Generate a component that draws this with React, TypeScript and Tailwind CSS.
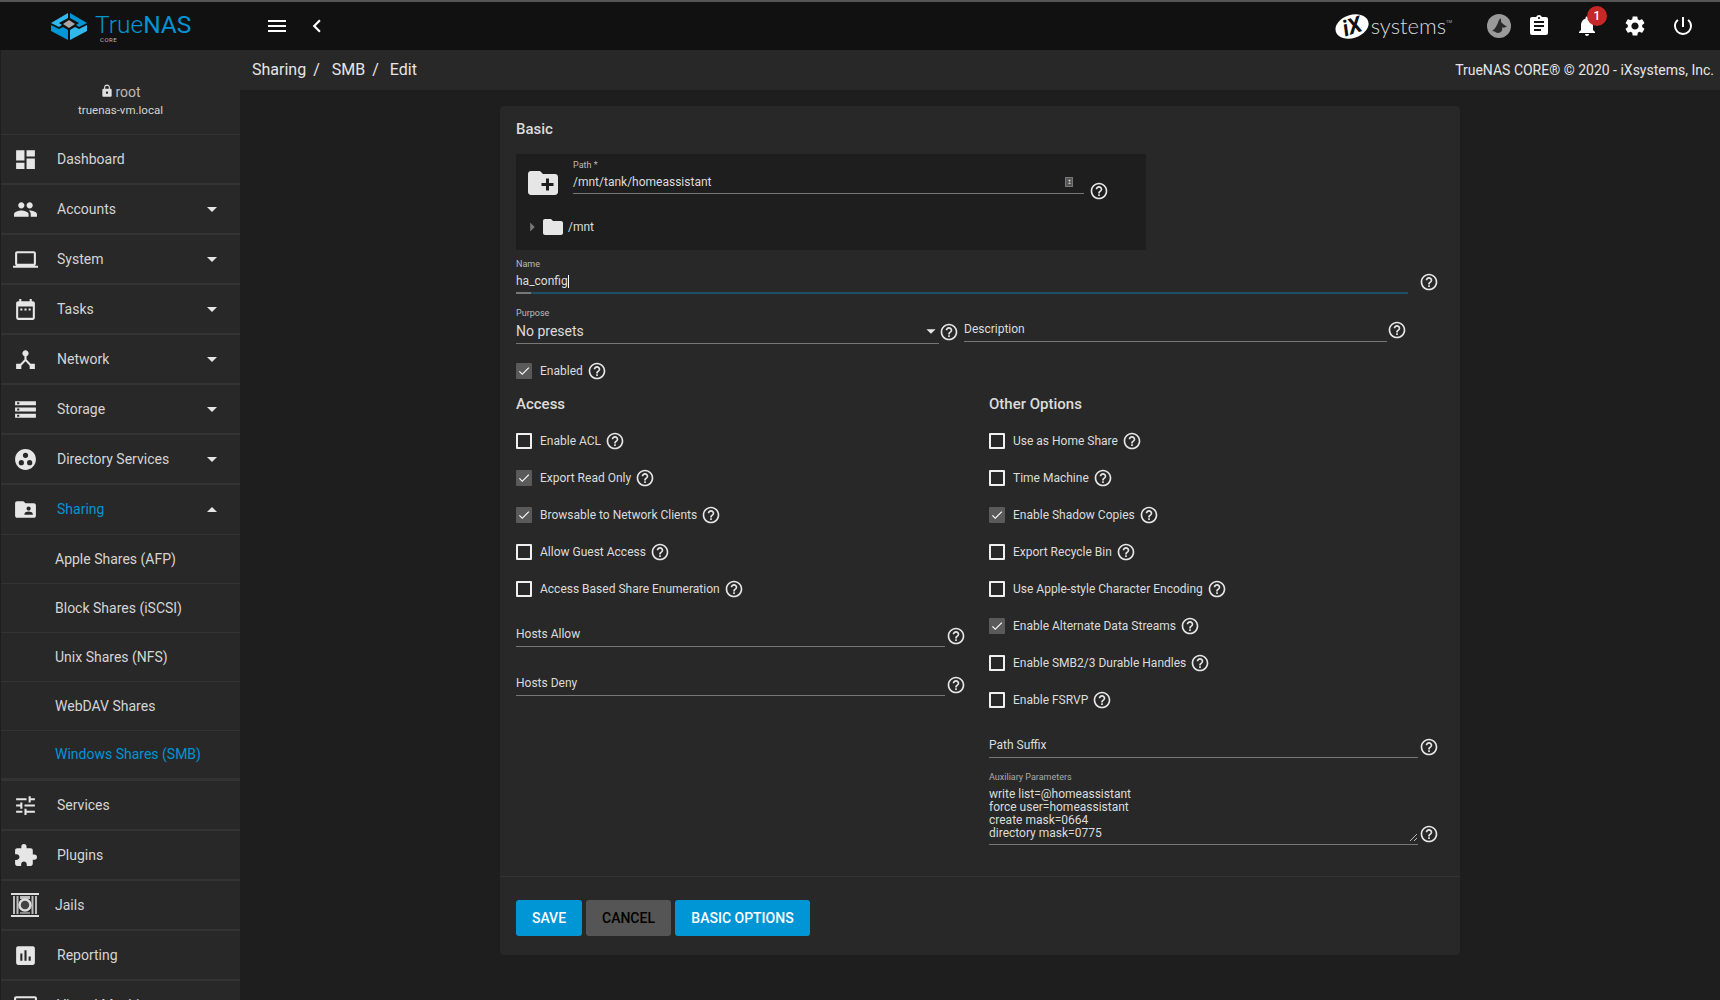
import type { ReactNode } from 'react';
import {
  MdAssessment, MdAssignment, MdChevronLeft, MdCreateNewFolder, MdDashboard, MdDateRange, MdDeviceHub, MdDvr,
  MdExtension, MdFolder, MdFolderShared, MdGroupWork, MdHelpOutline, MdLaptop, MdLock, MdMenu, MdNotifications,
  MdPeople, MdPowerSettingsNew, MdSettings, MdStorage, MdTune, MdCheck, MdArrowDropDown, MdArrowDropUp, MdArrowRight,
} from 'react-icons/md';

const font = { fontFamily: 'Roboto, sans-serif' };

function Help({ className = '' }: { className?: string }) {
  return <MdHelpOutline className={`shrink-0 text-[20px] text-[#e6e6e6] ${className}`} />;
}

function NavRow({ icon, label, caret, active, tight }: { icon: ReactNode; label: string; caret?: 'down' | 'up'; active?: boolean; tight?: boolean }) {
  return (
    <div className={`flex h-[50px] shrink-0 items-center border-[#333] pl-[12px] pr-[16px] ${caret === 'up' ? 'border-b' : 'border-b-2'}`}>
      <span className={`flex text-[25px] text-[#e6e6e6] ${tight ? 'w-[42px]' : 'w-[44px]'}`}>{icon}</span>
      <span className={`flex-1 text-[14px] ${active ? 'text-[#0095d5]' : 'text-[#d5d5d5]'}`}>{label}</span>
      {caret === 'down' && <MdArrowDropDown className="text-[24px] text-[#e6e6e6]" />}
      {caret === 'up' && <MdArrowDropUp className="text-[24px] text-[#e6e6e6]" />}
    </div>
  );
}

function SubRow({ label, active, last }: { label: string; active?: boolean; last?: boolean }) {
  return (
    <div className={`flex shrink-0 items-center pl-[54px] text-[14px] border-[#333] ${last ? 'h-[50px] border-b-[3px]' : 'h-[49px] border-b'} ${active ? 'text-[#0095d5]' : 'text-[#d5d5d5]'}`}>
      {label}
    </div>
  );
}

function Check({ label, checked }: { label: string; checked?: boolean }) {
  return (
    <div className="flex h-[37px] items-center">
      <span className={`flex h-4 w-4 items-center justify-center rounded-[1px] ${checked ? 'bg-[#5a5a5a]' : 'border-2 border-[#f0f0f0]'}`}>
        {checked && <MdCheck className="text-[14px] text-white" />}
      </span>
      <span className="ml-[8px] text-[12px] text-[#dcdcdc]">{label}</span>
      <Help className="ml-[4px]" />
    </div>
  );
}

function Line({ label, className = '' }: { label: string; className?: string }) {
  return (
    <div className={`flex items-center ${className}`}>
      <div className="flex h-[23px] w-[429px] items-start border-b border-[#777] text-[12px] leading-[20px] text-[#dcdcdc]">{label}</div>
      <Help className="ml-[1px]" />
    </div>
  );
}

function Logo() {
  return (
    <svg width="36" height="28" viewBox="0 0 36 28">
      <polygon points="0,11 17,1 17,6 8,11 11,13 8,15" fill="#31b9ee" />
      <polygon points="19,1 36,11 28,15 25,13 28,11 19,6" fill="#0095d5" />
      <polygon points="18,8 24,12 18,16 12,12" fill="#a8a8a8" />
      <polygon points="0,13 8,17 12,15 17,18 17,28 0,19" fill="#0095d5" />
      <polygon points="36,13 28,17 24,15 19,18 19,28 36,19" fill="#31b9ee" />
    </svg>
  );
}

function IxLogo() {
  return (
    <div className="flex items-center">
      <span className="flex h-[23px] w-[34px] -rotate-[18deg] items-center justify-center rounded-[50%] bg-white text-[22px] font-bold italic leading-none text-[#111]">iX</span>
      <span className="ml-[2px] text-[22px] font-light leading-none text-[#d8d8d8]" style={{ fontFamily: 'Lato, sans-serif' }}>systems</span>
      <span className="mb-[8px] text-[4px] leading-none text-[#aaa]">TM</span>
    </div>
  );
}

function JailIcon() {
  return (
    <svg width="28" height="24" viewBox="0 0 28 24" className="-ml-[2px]">
      <rect x="0" y="0" width="28" height="2" fill="#ddd" />
      <rect x="0" y="22" width="28" height="2" fill="#ddd" />
      <rect x="2" y="3" width="2" height="18" fill="#bbb" />
      <rect x="5.5" y="3" width="2" height="18" fill="#bbb" />
      <rect x="20.5" y="3" width="2" height="18" fill="#bbb" />
      <rect x="24" y="3" width="2" height="18" fill="#bbb" />
      <rect x="9" y="3" width="10" height="3" fill="#bbb" />
      <rect x="9" y="19" width="10" height="2" fill="#888" />
      <circle cx="14" cy="12" r="5.5" fill="#444" stroke="#ddd" strokeWidth="2.5" />
    </svg>
  );
}

export default function App() {
  return (
    <div className="flex h-screen flex-col overflow-hidden bg-[#1e1e1e]" style={font}>
      {/* top bar */}
      <header className="flex h-[50px] shrink-0 items-center border-t-2 border-[#555] bg-[#111] pr-[25px]">
        <div className="flex w-[240px] items-center pl-[51px]">
          <Logo />
          <div className="ml-[8px] mt-[4px] flex flex-col items-start">
            <span className="text-[24.5px] font-light leading-[24px] text-[#0095d5]">True<span className="font-normal">NAS</span></span>
            <span className="ml-[5px] text-[6px] leading-[6px] tracking-[0.5px] text-[#bbb]">CORE</span>
          </div>
        </div>
        <MdMenu className="ml-[25px] text-[24px] text-white" />
        <MdChevronLeft className="ml-[15px] text-[26px] text-white" />
        <div className="ml-auto flex items-center">
          <IxLogo />
          <svg width="24" height="24" viewBox="0 0 24 24" className="ml-[35px]">
            <circle cx="12" cy="12" r="12" fill="#9a9a9a" />
            <path d="M5 17 C8 15 10 12 12 6 C13 4 14 4 14 6 L14 8 C16 10 18 12 20 12 C18 14 16 14 15 13 C16 16 14 19 11 19 C9 19 8 17 5 17Z" fill="#2a2a2a" />
          </svg>
          <MdAssignment className="ml-[16px] text-[24px] text-white" />
          <span className="relative ml-[24px] flex">
            <MdNotifications className="text-[24px] text-white" />
            <span className="absolute -right-[8px] -top-[8px] flex h-[20px] w-[20px] items-center justify-center rounded-full bg-[#c62828] text-[12px] font-medium text-white">1</span>
          </span>
          <MdSettings className="ml-[24px] text-[24px] text-white" />
          <MdPowerSettingsNew className="ml-[24px] text-[24px] text-white" />
        </div>
      </header>

      <div className="flex min-h-0 flex-1">
        {/* side nav */}
        <aside className="flex w-[240px] shrink-0 flex-col overflow-hidden border-l border-[#1e1e1e] bg-[#282828]">
          <div className="flex h-[85px] shrink-0 flex-col items-center border-b border-[#333] pt-[32px]">
            <div className="flex items-center text-[14px] leading-[20px] text-[#bbb]"><MdLock className="mb-[3px] mr-[1px] text-[14px] text-[#e0e0e0]" />root</div>
            <div className="text-[11.5px] leading-[17px] text-[#d5d5d5]">truenas-vm.local</div>
          </div>
          <NavRow icon={<MdDashboard />} label="Dashboard" />
          <NavRow icon={<MdPeople />} label="Accounts" caret="down" />
          <NavRow icon={<MdLaptop />} label="System" caret="down" />
          <NavRow icon={<MdDateRange />} label="Tasks" caret="down" />
          <NavRow icon={<MdDeviceHub />} label="Network" caret="down" />
          <NavRow icon={<MdStorage />} label="Storage" caret="down" />
          <NavRow icon={<MdGroupWork />} label="Directory Services" caret="down" />
          <NavRow icon={<MdFolderShared />} label="Sharing" caret="up" active />
          <SubRow label="Apple Shares (AFP)" />
          <SubRow label="Block Shares (iSCSI)" />
          <SubRow label="Unix Shares (NFS)" />
          <SubRow label="WebDAV Shares" />
          <SubRow label="Windows Shares (SMB)" active last />
          <NavRow icon={<MdTune />} label="Services" />
          <NavRow icon={<MdExtension />} label="Plugins" />
          <NavRow icon={<JailIcon />} label="Jails" tight />
          <NavRow icon={<MdAssessment />} label="Reporting" />
          <NavRow icon={<MdDvr />} label="Virtual Machines" />
        </aside>

        <main className="flex min-w-0 flex-1 flex-col">
          <div className="flex h-[40px] shrink-0 items-center justify-between bg-[#282828] pl-[12px] pr-[6px] text-[#e6e6e6]">
            <div className="flex items-center text-[16px]">
              <span>Sharing</span><span className="ml-[7px] mr-[12px]">/</span>
              <span>SMB</span><span className="ml-[7px] mr-[11px]">/</span>
              <span>Edit</span>
            </div>
            <div className="text-[14px]">TrueNAS CORE® © 2020 - iXsystems, Inc.</div>
          </div>

          {/* form card */}
          <div className="ml-[260px] mt-[16px] flex h-[849px] w-[960px] flex-col rounded-[4px] bg-[#282828] text-[#dcdcdc]">
            <div className="flex-1 px-[16px] pt-[13px]">
              <h3 className="text-[15px] font-medium leading-[20px]">Basic</h3>

              <div className="mt-[15px] h-[96px] w-[630px] bg-[#1e1e1e] pl-[12px]">
                <div className="flex items-start pt-[5px]">
                  <MdCreateNewFolder className="-ml-[3px] mt-[6px] text-[36px] text-[#e6e6e6]" />
                  <div className="ml-[12px] w-[511px] border-b border-[#777]">
                    <div className="text-[9px] leading-[12px] text-[#bbb]">Path *</div>
                    <div className="flex h-[22px] items-center justify-between text-[12px]">
                      /mnt/tank/homeassistant
                      <span className="mr-[11px] flex h-[10px] w-[8px] items-center justify-center border border-[#777] bg-[#555] text-[6px] leading-none">↥</span>
                    </div>
                  </div>
                  <Help className="ml-[5px] mt-[22px]" />
                </div>
                <div className="mt-[14px] flex items-center">
                  <MdArrowRight className="-ml-[7px] text-[22px] text-[#777]" />
                  <MdFolder className="-ml-[2px] text-[24px] text-[#e6e6e6]" />
                  <span className="ml-[3px] text-[12px]">/mnt</span>
                </div>
              </div>

              <div className="mt-[8px] flex items-center">
                <div className="w-[892px]">
                  <div className="text-[9px] leading-[12px] text-[#bbb]">Name</div>
                  <div className="flex h-[22px] items-center text-[12px]">ha_config<span className="ml-[0.5px] h-[13px] w-px bg-white" /></div>
                  <div className="flex h-[2px]"><div className="w-[15px] bg-[#777]" /><div className="flex-1 bg-[#1c4f68]" /></div>
                </div>
                <Help className="ml-[11px] mt-[12px]" />
              </div>

              <div className="mt-[13px] flex items-center">
                <div className="w-[423px] border-b border-[#777]">
                  <div className="text-[9px] leading-[12px] text-[#bbb]">Purpose</div>
                  <div className="flex h-[24px] items-center justify-between text-[14px]">
                    No presets
                    <MdArrowDropDown className="-mr-[3px] text-[22px] text-[#e6e6e6]" />
                  </div>
                </div>
                <Help className="mt-[13px]" />
                <div className="ml-[5px] mt-[7px] flex items-center">
                  <div className="flex h-[26px] w-[423px] items-center border-b border-[#777] text-[12px]">Description</div>
                  <Help className="mt-[2px]" />
                </div>
              </div>

              <div className="mt-[8px]"><Check label="Enabled" checked /></div>

              <div className="mt-[5px] grid grid-cols-[473px_1fr]">
                <div>
                  <h3 className="text-[15px] font-medium leading-[20px]">Access</h3>
                  <div className="mt-[8px]">
                    <Check label="Enable ACL" />
                    <Check label="Export Read Only" checked />
                    <Check label="Browsable to Network Clients" checked />
                    <Check label="Allow Guest Access" />
                    <Check label="Access Based Share Enumeration" />
                  </div>
                  <Line label="Hosts Allow" className="mt-[17px]" />
                  <Line label="Hosts Deny" className="mt-[26px]" />
                </div>
                <div>
                  <h3 className="text-[15px] font-medium leading-[20px]">Other Options</h3>
                  <div className="mt-[8px]">
                    <Check label="Use as Home Share" />
                    <Check label="Time Machine" />
                    <Check label="Enable Shadow Copies" checked />
                    <Check label="Export Recycle Bin" />
                    <Check label="Use Apple-style Character Encoding" />
                    <Check label="Enable Alternate Data Streams" checked />
                    <Check label="Enable SMB2/3 Durable Handles" />
                    <Check label="Enable FSRVP" />
                  </div>
                  <Line label="Path Suffix" className="mt-[17px]" />
                  <div className="mt-[13px] flex items-end">
                    <div className="w-[429px] border-b border-[#777]">
                      <div className="text-[9px] leading-[12px] text-[#aaa]">Auxiliary Parameters</div>
                      <div className="mt-[4px] flex h-[57px] items-end justify-between text-[12px] leading-[13px]">
                        <div className="pb-[4px]">write list=@homeassistant<br />force user=homeassistant<br />create mask=0664<br />directory mask=0775</div>
                        <svg width="7" height="7" viewBox="0 0 7 7" className="mb-[3px] mr-px">
                          <path d="M0 7 L7 0 M4 7 L7 4" stroke="#bbb" strokeWidth="1" />
                        </svg>
                      </div>
                    </div>
                    <Help className="ml-[1px] mb-[1px]" />
                  </div>
                </div>
              </div>
            </div>

            <div className="flex h-[79px] shrink-0 items-start gap-[4px] border-t border-[#333] px-[16px] pt-[23px] text-[14px] font-medium">
              <button className="h-[36px] w-[66px] rounded-[3px] bg-[#0095d5] text-white">SAVE</button>
              <button className="h-[36px] w-[85px] rounded-[3px] bg-[#555] text-black">CANCEL</button>
              <button className="h-[36px] w-[135px] rounded-[3px] bg-[#0095d5] text-white">BASIC OPTIONS</button>
            </div>
          </div>
        </main>
      </div>
    </div>
  );
}
